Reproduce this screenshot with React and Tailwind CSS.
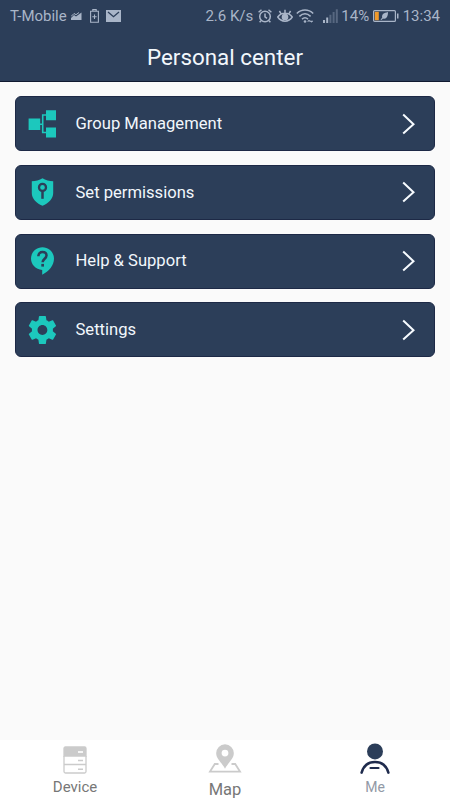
import React, { useState } from "react";

const GroupIcon = () => (
  <svg viewBox="0 0 28 28" className="h-7 w-7" fill="#1cc8bd">
    <path d="M.6 8.500h11.600v11.500H.6zM18 .2h10v10H18zM18 17.600h10v10H18z" />
    <path
      d="M12 14.200h3M18 5h-3.300v17.500H18"
      fill="none"
      stroke="#1cc8bd"
      strokeWidth="1.600"
    />
  </svg>
);

const ShieldIcon = () => (
  <svg viewBox="0 0 28 28" className="h-7 w-7">
    <path
      d="M14.500.2c-3 2-7 2.800-10.700 3V15c0 5.800 4.400 10 10.700 12.800C20.800 25 25.200 20.800 25.200 15V3.200C21.500 3 17.500 2.200 14.500.2z"
      fill="#1cc8bd"
    />
    <circle cx="14.500" cy="9.400" r="3.500" fill="none" stroke="#2c3e59" strokeWidth="2.300" />
    <path d="M14.500 12.500v8.300" stroke="#2c3e59" strokeWidth="2.500" />
  </svg>
);

const HelpIcon = () => (
  <svg viewBox="0 0 28 28" className="h-7 w-7">
    <path
      d="M14.500.3C8 .3 3 5.300 3 11.600c0 6.100 4.800 11 11.200 11.400V27.700C21 24.600 26 18.500 26 11.600 26 5.300 20.900.3 14.500.3z"
      fill="#1cc8bd"
    />
    <path
      d="M10.400 9.200c0-2.700 1.700-4.200 4.100-4.200s4 1.400 4 3.600c0 3-3.900 3.300-3.900 6.700"
      fill="none"
      stroke="#2c3e59"
      strokeWidth="2.500"
    />
    <path d="M13.300 16.900h2.700v2.700h-2.700z" fill="#2c3e59" />
  </svg>
);

const GearIcon = () => (
  <svg viewBox="1.700 2 20 20" className="h-7 w-7" fill="#1cc8bd">
    <path d="M19.430 12.980c.04-.32.07-.64.07-.98s-.03-.66-.07-.98l2.110-1.650c.19-.15.24-.42.12-.64l-2-3.460c-.12-.22-.39-.3-.61-.22l-2.490 1c-.52-.4-1.080-.73-1.690-.98l-.38-2.650C14.460 2.180 14.250 2 14 2h-4c-.25 0-.46.18-.49.42l-.38 2.650c-.61.25-1.170.59-1.690.98l-2.490-1c-.23-.09-.49 0-.61.22l-2 3.460c-.13.22-.07.49.12.64l2.110 1.650c-.04.32-.07.65-.07.98s.03.66.07.98l-2.110 1.650c-.19.15-.24.42-.12.64l2 3.460c.12.22.39.3.61.22l2.490-1c.52.4 1.080.73 1.690.98l.38 2.650c.03.24.24.42.49.42h4c.25 0 .46-.18.49-.42l.38-2.650c.61-.25 1.170-.59 1.690-.98l2.490 1c.23.09.49 0 .61-.22l2-3.460c.12-.22.07-.49-.12-.64l-2.110-1.650zM12 15.500c-1.930 0-3.500-1.570-3.500-3.500s1.570-3.500 3.500-3.500 3.500 1.570 3.500 3.500-1.570 3.500-3.500 3.500z" />
  </svg>
);

const DeviceIcon = () => (
  <svg viewBox="0 0 24 28" className="h-7 w-6" fill="none" stroke="#cbcbcb" strokeWidth="1.300">
    <path d="M1 10V2.500C1 1.500 1.500 1 2.500 1h19c1 0 1.500.5 1.500 1.500V10z" fill="#cbcbcb" />
    <path d="M1 10v15.500c0 1 .5 1.500 1.500 1.500h19c1 0 1.500-.5 1.500-1.500V10M1 18.500h22" />
    <path d="M15 6h5" stroke="#fff" strokeWidth="1.600" />
    <path d="M15 14.500h5M15 23.300h5" strokeWidth="1.600" />
  </svg>
);

const MapIcon = () => (
  <svg viewBox="0 0 34 29" className="h-[29px] w-[34px]">
    <path
      d="M10.500 20H6.800L2 27.600h30L27.200 20h-3.700"
      fill="none"
      stroke="#cbcbcb"
      strokeWidth="1.800"
    />
    <path
      d="M17 .3a8.800 8.800 0 0 0-8.800 8.900c0 5.800 5.500 9 8.800 15.600 3.300-6.600 8.800-9.800 8.800-15.600A8.800 8.800 0 0 0 17 .3zm0 5.400a3.400 3.400 0 1 1 0 6.800 3.400 3.400 0 0 1 0-6.800z"
      fill="#cbcbcb"
      fillRule="evenodd"
    />
  </svg>
);

const MeIcon = () => (
  <svg viewBox="0 0 32 32" className="h-8 w-8">
    <circle cx="16" cy="8.400" r="8" fill="#2c3e59" />
    <path
      d="M2.600 29.600C4.500 23 9.500 19 16 19s11.500 4 13.400 10.600"
      fill="none"
      stroke="#1f2b4d"
      strokeWidth="2.500"
      strokeLinecap="round"
    />
    <path d="M11.500 25h8" stroke="#1f2b4d" strokeWidth="2.200" strokeLinecap="round" />
  </svg>
);

const menuItems = [
  { label: "Group Management", icon: GroupIcon },
  { label: "Set permissions", icon: ShieldIcon },
  { label: "Help & Support", icon: HelpIcon },
  { label: "Settings", icon: GearIcon },
];

const StatusBar = () => (
  <div className="flex h-8 items-center justify-between pl-[10px] pr-[10px] text-[15px] text-[#a9b5c8]">
    <div className="flex items-center">
      <span>T-Mobile</span>
      <svg viewBox="0 0 11 8" className="ml-1 h-2 w-[11px]" fill="currentColor">
        <path d="M0 8V6l3-3 2 1.500L10.500.5V8z" />
        <path d="M0 4.500L3 1.500l2 1.200L8 .5" fill="none" stroke="currentColor" />
      </svg>
      <svg
        viewBox="0 0 9 14"
        className="ml-2 h-[14px] w-[9px]"
        fill="none"
        stroke="currentColor"
        strokeWidth="1.100"
      >
        <path d="M.6 2.300h7.800v11H.6zM2.800 2V.6h3.400V2M4.500 5.500v4.400M2.300 7.700h4.400" />
      </svg>
      <svg viewBox="0 0 15 12" className="ml-[7px] h-3 w-[15px]">
        <path d="M0 0h15v12H0z" fill="currentColor" />
        <path d="M2 2l5.500 4.700L13 2" fill="none" stroke="#2c3e59" strokeWidth="1.300" />
      </svg>
    </div>
    <div className="flex items-center">
      <span>2.6 K/s</span>
      <svg
        viewBox="0 0 14 14"
        className="ml-[5px] h-[14px] w-[14px]"
        fill="none"
        stroke="currentColor"
        strokeWidth="1.500"
      >
        <circle cx="7" cy="7.500" r="5.300" />
        <path d="M.6 3.200L3.500.7M13.400 3.200L10.500.7M7 4.500v3.400l2 1.500M3 11.700l-1.400 1.600M11 11.700l1.400 1.600" />
      </svg>
      <svg
        viewBox="0 0 16 14"
        className="ml-[5px] h-[14px] w-4"
        fill="none"
        stroke="currentColor"
        strokeWidth="1.500"
      >
        <path d="M.8 8c3.500-5 10.900-5 14.400 0-3.500 5.500-10.900 5.500-14.400 0zM8 4V.8M4 4.700L2.400 2M12 4.700L13.600 2" />
        <circle cx="8" cy="8" r="2.600" fill="currentColor" />
      </svg>
      <svg
        viewBox="0 0 18 14"
        className="ml-[3px] h-[14px] w-[18px]"
        fill="none"
        stroke="currentColor"
        strokeWidth="1.500"
      >
        <path d="M.8 4.500c4.700-4.700 11.700-4.700 16.400 0M3.400 7.400c3.500-3.300 7.700-3.300 11.200 0M6 10.100c2-1.800 4-1.800 6 0" />
        <circle cx="9" cy="12.500" r="1.300" fill="currentColor" stroke="none" />
        <path d="M11.500 12.300l1.500-1.300 1.500 1.300zM14 12l1.500 1.300L17 12z" fill="currentColor" strokeWidth=".5" />
      </svg>
      <svg viewBox="0 0 15 14" className="ml-[9px] h-[14px] w-[15px]" fill="currentColor">
        <path d="M0 11h2v3H0zM3.200 8.500h2V14h-2z" />
        <path d="M6.400 5.700h2V14h-2zM9.600 3h2v11h-2zM12.800.2h2V14h-2z" opacity=".35" />
      </svg>
      <span className="ml-[3px]">14%</span>
      <svg viewBox="0 0 26 12" className="ml-1 h-3 w-[26px]">
        <rect x=".6" y=".6" width="21.800" height="10.800" rx="1" fill="none" stroke="currentColor" strokeWidth="1.200" />
        <path d="M24 3.500h1.500v5H24z" fill="currentColor" />
        <path d="M1.800 1.800h4v8.400h-4z" fill="#f19a2b" />
        <path d="M7.500 9.500l1.700-1.800C8.500 4 11 3 15 2c0 4.500-1.500 7.500-5 6.500L8.500 10z" fill="currentColor" />
      </svg>
      <span className="ml-[3.500px]">13:34</span>
    </div>
  </div>
);

const tabs = [
  { label: "Device", icon: DeviceIcon, pad: "pt-[6px]", text: "mt-[2px] text-[15px] text-[#777777]" },
  { label: "Map", icon: MapIcon, pad: "pt-[4px]", text: "mt-[5px] text-[16.500px] text-[#777777]" },
  { label: "Me", icon: MeIcon, pad: "pt-[3px]", text: "mt-[2px] text-[14px] text-[#9299a6]" },
];

const App = () => {
  const [activeTab, setActiveTab] = useState("Me");

  return (
    <div className="flex h-[800px] w-[450px] flex-col overflow-hidden bg-[#fafafa] font-['Roboto',sans-serif]">
      <header className="h-[82px] border-b border-[#101a30] bg-[#2c3e59]">
        <StatusBar />
        <h1 className="pt-[9px] text-center text-[22.400px] leading-8 text-[#f2f7fc]">
          Personal center
        </h1>
      </header>

      <main className="flex flex-1 flex-col gap-[13.8px] px-[15px] pt-[14px]">
        {menuItems.map(({ label, icon: Icon }) => (
          <button
            key={label}
            className="flex h-[55px] items-center rounded-md border border-[#1d2946] bg-[#2c3e59] pl-3 pr-[18px] text-[16.600px] text-[#f2f7fc]"
          >
            <Icon />
            <span className="ml-[19.500px] pt-[1.500px]">{label}</span>
            <svg
              viewBox="0 0 14 22"
              className="ml-auto h-[22px] w-[14px]"
              fill="none"
              stroke="#f7fbff"
              strokeWidth="2"
            >
              <path d="M1.200 1.500l10.300 9.700L1.200 20.500" />
            </svg>
          </button>
        ))}
      </main>

      <nav className="grid h-[60px] grid-cols-3 bg-white">
        {tabs.map(({ label, icon: Icon, pad, text }) => (
          <button
            key={label}
            onClick={() => setActiveTab(label)}
            aria-current={activeTab === label ? "page" : undefined}
            className={`flex flex-col items-center ${pad}`}
          >
            <Icon />
            <span className={text}>{label}</span>
          </button>
        ))}
      </nav>
    </div>
  );
};

export default App;
